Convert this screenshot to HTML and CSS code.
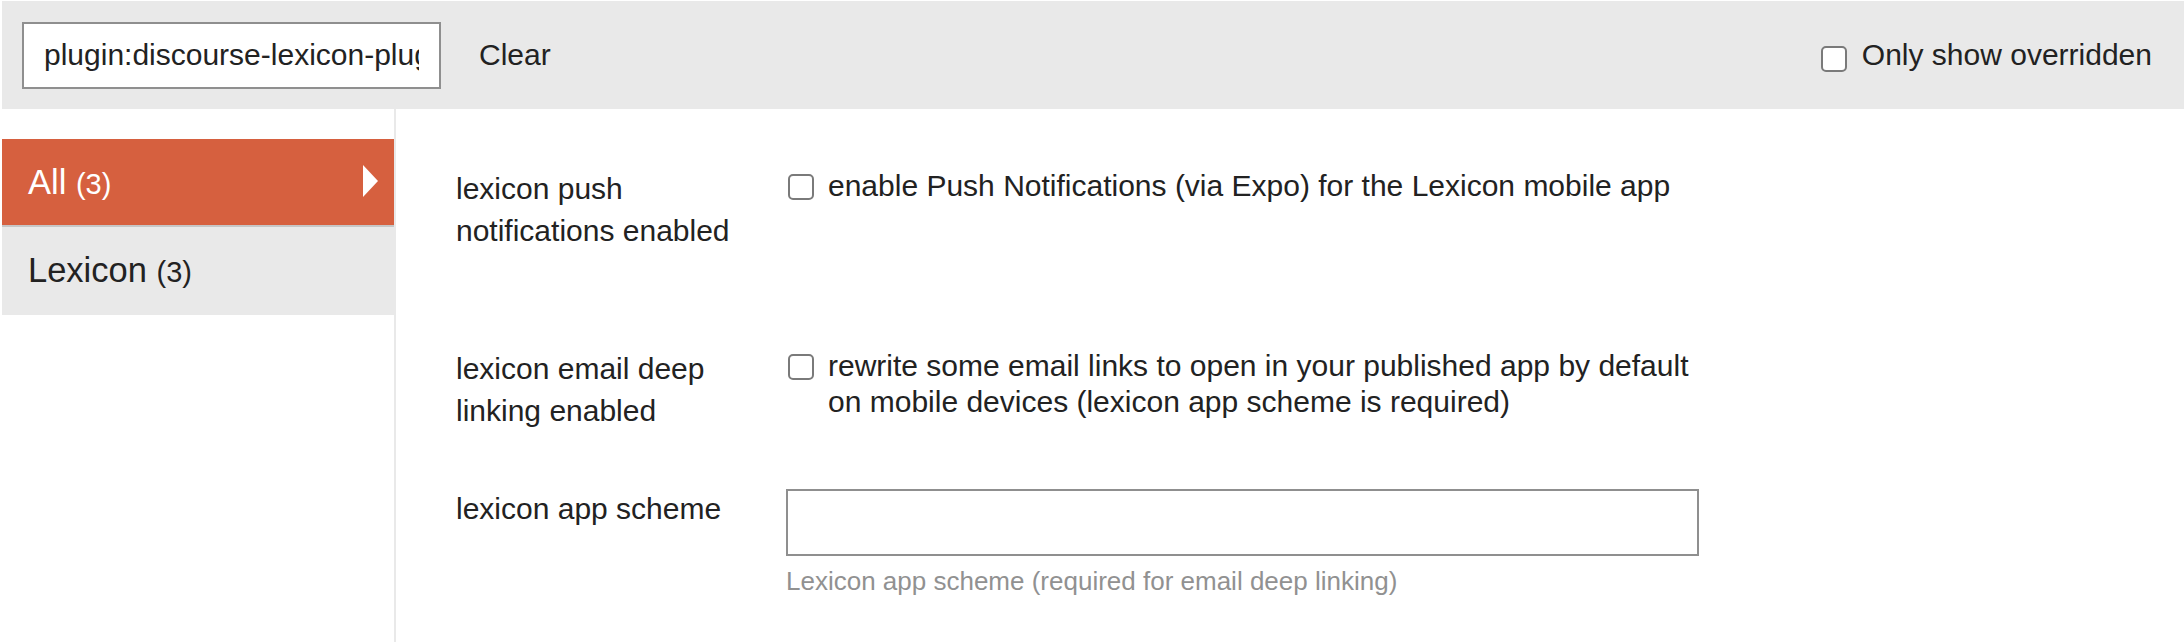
FILE: index.html
```html
<!DOCTYPE html>
<html lang="en">
<head>
<meta charset="utf-8">
<title>Settings</title>
<link rel="stylesheet" href="styles.css">
</head>
<body>
<div class="page">
  <div class="controls">
    <input class="search" type="text" value="plugin:discourse-lexicon-plugin">
    <button class="clear" type="button">Clear</button>
    <label class="only-overridden">
      <input class="check check--header" type="checkbox">
      <span>Only show overridden</span>
    </label>
  </div>
  <div class="body">
    <nav class="sidebar">
      <a class="nav-item nav-item--active"><span>All <span class="count">(3)</span></span><span class="arrow"></span></a>
      <a class="nav-item"><span>Lexicon <span class="count">(3)</span></span></a>
    </nav>
    <main class="settings">
      <div class="setting setting--tall">
        <div class="setting-label">lexicon push notifications enabled</div>
        <div class="setting-value">
          <label class="bool">
            <input class="check" type="checkbox">
            <span class="desc">enable Push Notifications (via Expo) for the Lexicon mobile app</span>
          </label>
        </div>
      </div>
      <div class="setting">
        <div class="setting-label">lexicon email deep linking enabled</div>
        <div class="setting-value">
          <label class="bool">
            <input class="check" type="checkbox">
            <span class="desc">rewrite some email links to open in your published app by default on mobile devices (lexicon app scheme is required)</span>
          </label>
        </div>
      </div>
      <div class="setting">
        <div class="setting-label">lexicon app scheme</div>
        <div class="setting-value setting-value--column">
          <input class="text-input" type="text">
          <div class="help">Lexicon app scheme (required for email deep linking)</div>
        </div>
      </div>
    </main>
  </div>
</div>
</body>
</html>
```
FILE: styles.css
```css
* {
  box-sizing: border-box;
}

html, body {
  margin: 0;
  padding: 0;
  background: #ffffff;
}

body {
  font-family: "Liberation Sans", Arial, Helvetica, sans-serif;
  color: #222222;
  font-size: 30px;
}

.page {
  padding: 1px 0 0 2px;
  width: 2184px;
  height: 642px;
  overflow: hidden;
}

.controls {
  display: flex;
  align-items: center;
  height: 108px;
  background: #e9e9e9;
  padding: 0 32px 0 20px;
}

.search {
  width: 419px;
  height: 67px;
  border: 2px solid #8f8f8f;
  border-radius: 0;
  background: #ffffff;
  padding: 0 20px;
  font-family: inherit;
  font-size: 30px;
  color: #222222;
  outline: none;
}

.clear {
  margin-left: 38px;
  border: none;
  background: none;
  padding: 0;
  font-family: inherit;
  font-size: 30px;
  color: #222222;
}

.only-overridden {
  margin-left: auto;
  display: flex;
  align-items: center;
  gap: 15px;
  font-size: 30px;
  line-height: 36px;
}

.check {
  appearance: none;
  -webkit-appearance: none;
  width: 26px;
  height: 26px;
  margin: 0;
  border: 2px solid #7a7a7a;
  border-radius: 5px;
  background: #ffffff;
  flex: none;
}

.check--header {
  margin-top: 7px;
}

.body {
  display: flex;
  min-height: 533px;
}

.sidebar {
  width: 394px;
  flex: none;
  border-right: 2px solid #e9e9e9;
  padding-top: 30px;
}

.nav-item {
  display: flex;
  align-items: center;
  height: 88px;
  padding: 0 16px 0 26px;
  font-size: 34.5px;
  color: #222222;
  background: #e9e9e9;
  border-bottom: 2px solid #e9e9e9;
}

.nav-item--active {
  background: #d6603f;
  color: #ffffff;
  border-bottom-color: #c6c6c6;
}

.count {
  font-size: 29px;
}

.arrow {
  margin-left: auto;
  width: 0;
  height: 0;
  border-top: 16px solid transparent;
  border-bottom: 16px solid transparent;
  border-left: 15px solid #ffffff;
  margin-top: -3px;
}

.settings {
  flex: 1;
  padding: 59px 0 0 60px;
}

.setting {
  display: flex;
  align-items: flex-start;
  margin-bottom: 56px;
}

.setting--tall {
  margin-bottom: 96px;
}

.setting-label {
  width: 330px;
  flex: none;
  padding-right: 20px;
  font-size: 30px;
  line-height: 42px;
}

.setting-value {
  width: 913px;
  flex: none;
}

.setting-value--column {
  display: flex;
  flex-direction: column;
}

.bool {
  display: flex;
  align-items: flex-start;
}

.bool .check {
  margin: 6px 0 0 2px;
}

.desc {
  margin-left: 14px;
  font-size: 30px;
  line-height: 36px;
}

.text-input {
  width: 913px;
  height: 67px;
  margin-top: 1px;
  border: 2px solid #8f8f8f;
  background: #ffffff;
  padding: 0 20px;
  font-family: inherit;
  font-size: 30px;
  outline: none;
}

.help {
  margin-top: 10px;
  font-size: 26px;
  line-height: 30px;
  color: #919191;
}
```
